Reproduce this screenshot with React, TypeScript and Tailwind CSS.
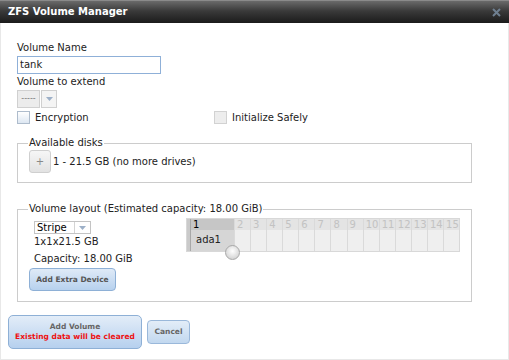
import React from 'react';

const slots = [2, 3, 4, 5, 6, 7, 8, 9, 10, 11, 12, 13, 14, 15];

function Arrow() {
    return (
        <svg width="7" height="4" viewBox="0 0 7 4">
            <path d="M0 0 L7 0 L3.5 4 Z" fill="#9db0c8" />
        </svg>
    );
}

export default function App() {
    return (
        <div className="h-[360px] w-[509px] overflow-hidden bg-white font-['DejaVu_Sans',Verdana,sans-serif] text-[10px] leading-[12px] text-[#222]">
            <div className="flex h-[23px] items-center justify-between border-t border-[#8a8a8a] bg-[linear-gradient(to_bottom,#6a6a6a,#3a3a3a_45%,#1b1b1b)] pl-[8px] pr-[8px]">
                <span className="text-[10px] font-bold text-white">ZFS Volume Manager</span>
                <svg width="9" height="9" viewBox="0 0 9 9">
                    <path d="M1 1 L8 8 M8 1 L1 8" stroke="#6f7f90" strokeWidth="2" />
                </svg>
            </div>

            <div className="h-[337px] border-x border-b border-[#e8e8e8]">
                <div className="pl-[16px] pt-[19px]">
                    <div>Volume Name</div>
                    <div className="mt-[2px] flex h-[18px] w-[144px] items-center border border-[#8fb0d8] pl-[2px]">tank</div>

                    <div className="mt-[2px]">Volume to extend</div>
                    <div className="mt-[2px] flex h-[18px] w-[40px]">
                        <div className="flex w-[23px] items-center justify-center border border-[#d0d0d0] bg-[#ececec] text-[8px] text-[#777]">-----</div>
                        <div className="ml-[1px] flex w-[16px] items-center justify-center border border-[#d0d0d0] bg-[#f4f4f4]">
                            <Arrow />
                        </div>
                    </div>

                    <div className="mt-[3px] flex h-[13px] items-center">
                        <div className="flex w-[197px] items-center">
                            <div className="h-[13px] w-[13px] border border-[#aebccc] bg-[linear-gradient(to_bottom,#ffffff,#dde7f2)]" />
                            <span className="ml-[5px]">Encryption</span>
                        </div>
                        <div className="flex items-center">
                            <div className="h-[13px] w-[13px] border border-[#d2d2d2] bg-[#ededed]" />
                            <span className="ml-[5px]">Initialize Safely</span>
                        </div>
                    </div>

                    <fieldset className="mt-[13px] w-[455px] border border-[#cccccc] px-[11px] pb-[9px] pt-[1px]">
                        <legend className="-ml-px px-px">Available disks</legend>
                        <div className="flex items-center">
                            <div className="flex h-[23px] w-[22px] items-center justify-center rounded-[3px] border border-[#cfcfcf] bg-[linear-gradient(to_bottom,#f6f6f6,#e2e2e2)] text-[10px] text-[#888]">+</div>
                            <span className="ml-[2px]">1 - 21.5 GB (no more drives)</span>
                        </div>
                    </fieldset>

                    <fieldset className="mt-[20px] w-[455px] border border-[#cccccc] pb-[10px] pl-[11px]">
                        <legend className="-ml-px px-px">Volume layout (Estimated capacity: 18.00 GiB)</legend>
                        <div className="flex items-start">
                            <div className="w-[157px]">
                                <div className="ml-[5px] mt-[6px] flex h-[13px] w-[57px] border border-[#c4c4c4] bg-white">
                                    <div className="flex w-[39px] items-center pl-[2px] leading-[11px] text-black">Stripe</div>
                                    <div className="flex flex-1 items-center justify-center border-l border-[#d4d4d4]">
                                        <Arrow />
                                    </div>
                                </div>
                                <div className="ml-[5px] mt-[2px]">1x1x21.5 GB</div>
                                <div className="ml-[5px] mt-[5px]">Capacity: 18.00 GiB</div>
                                <div className="mt-[3px] flex h-[23px] w-[87px] items-center justify-center rounded-[4px] border border-[#8eb0d6] bg-[linear-gradient(to_bottom,#dfeaf7,#b7d1ee)] text-[7.5px] font-bold text-[#555]">
                                    Add Extra Device
                                </div>
                            </div>

                            <div className="relative mt-[3px] flex h-[34px] w-[274px] border border-[#d8d8d8] bg-[#eeeeee]">
                                <div className="w-[4px] border-r border-[#a8a8a8] bg-[#cacaca]" />
                                <div className="flex w-[43px] flex-col">
                                    <div className="h-[11px] bg-[#c6c6c6] pl-[2px] leading-[11px] text-black">1</div>
                                    <div className="flex-1 bg-[#d6d6d6] pl-[5px] pt-[4px]">ada1</div>
                                </div>
                                {slots.map((n) => (
                                    <div key={n} className="flex flex-1 flex-col border-l border-[#dadada]">
                                        <div className="h-[11px] bg-[#e4e4e4] pl-[2px] leading-[11px] text-[#c2c2c2]">{n}</div>
                                        <div className="flex-1 bg-[#efefef]" />
                                    </div>
                                ))}
                                <div className="absolute left-[38px] top-[26px] h-[15px] w-[15px] rounded-full border border-[#a8a8a8] bg-[radial-gradient(circle_at_50%_40%,#ffffff,#d8d8d8_70%,#bcbcbc)]" />
                            </div>
                        </div>
                    </fieldset>
                </div>

                <div className="mt-[13px] flex items-center gap-[5px] pl-[7px]">
                    <div className="flex h-[34px] w-[134px] flex-col items-center justify-center rounded-[5px] border border-[#8eb0d6] bg-[linear-gradient(to_bottom,#e3edf8,#b6d0ee)] text-[7.5px] font-bold leading-[10px]">
                        <span className="text-[#666]">Add Volume</span>
                        <span className="text-[#ee1111]">Existing data will be cleared</span>
                    </div>
                    <div className="flex h-[24px] w-[43px] items-center justify-center rounded-[4px] border border-[#9ab8da] bg-[linear-gradient(to_bottom,#e3edf8,#c2d8ef)] text-[7.5px] font-bold text-[#666]">
                        Cancel
                    </div>
                </div>
            </div>
        </div>
    );
}
